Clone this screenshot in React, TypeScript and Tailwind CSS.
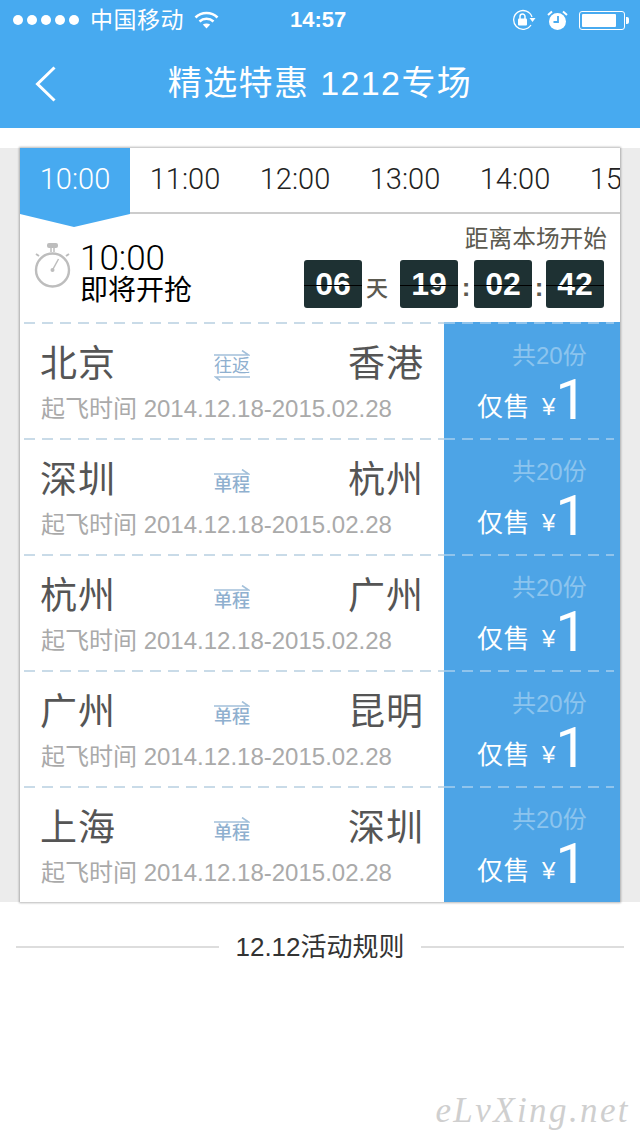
const TIMES = ['10:00', '11:00', '12:00', '13:00', '14:00', '15:00'];

const FLIGHTS = [
    { from: '北京', to: '香港', type: '往返' },
    { from: '深圳', to: '杭州', type: '单程' },
    { from: '杭州', to: '广州', type: '单程' },
    { from: '广州', to: '昆明', type: '单程' },
    { from: '上海', to: '深圳', type: '单程' },
];

const SANS = "font-['Liberation_Sans','Noto_Sans_CJK_SC',sans-serif]";

function FlipBox({ value }: { value: string }) {
    return (
        <div className="relative flex h-[48px] w-[58px] items-center justify-center rounded-[3px] bg-[#1e3133] text-[32px] font-bold leading-none text-white">
            {value}
            <div className="absolute left-0 right-0 top-[25px] h-px bg-black" />
        </div>
    );
}

function Stopwatch() {
    return (
        <svg width="38" height="46" viewBox="0 0 38 46" fill="none" stroke="#bdbdbd">
            <rect x="13" y="0" width="11" height="5" rx="2" fill="#bdbdbd" stroke="none" />
            <path d="M17 5v4M20 5v4" strokeWidth="1.5" />
            <path d="M2 11l3 2M35 11l-3 2" strokeWidth="2" />
            <circle cx="18.5" cy="27" r="16.5" strokeWidth="2.4" />
            <path d="M18.5 27l6-11" strokeWidth="1.5" />
            <circle cx="18.5" cy="27" r="2" fill="#bdbdbd" stroke="none" />
        </svg>
    );
}

function RouteBadge({ type }: { type: string }) {
    const isReturn = type === '往返';
    return (
        <div className={`flex w-[36px] flex-col items-center text-[#8fb0cf] ${isReturn ? '' : 'mt-[2px]'}`}>
            <svg width="36" height="6" viewBox="0 0 36 6" fill="none" stroke="#a3c0da" strokeWidth="1.6">
                <path d="M0 5h34.5L28 0.5" />
            </svg>
            <span className={`text-[18px] leading-[20px] ${isReturn ? '' : 'font-medium'}`}>{type}</span>
            {isReturn && (
                <svg width="36" height="5" viewBox="0 0 36 5" fill="none" stroke="#a3c0da" strokeWidth="1.6">
                    <path d="M36 1H1.5L6 4.5" />
                </svg>
            )}
        </div>
    );
}

function FlightRow({ from, to, type }: { from: string; to: string; type: string }) {
    return (
        <div className="flex h-[116px]">
            <div className="w-[424px]">
                <div className="ml-[4px] h-[2px] bg-[repeating-linear-gradient(90deg,#c9dbe8_0,#c9dbe8_11px,transparent_11px,transparent_18px)]" />
                <div className="mt-[19px] flex h-[44px] items-center justify-between pl-[20px] pr-[20px]">
                    <span className="w-[76px] text-[37px] leading-[44px] tracking-[1px] text-[#555]">{from}</span>
                    <RouteBadge type={type} />
                    <span className="w-[76px] text-right text-[37px] leading-[44px] tracking-[1px] text-[#555]">{to}</span>
                </div>
                <div className="mt-[6px] whitespace-nowrap pl-[21px] text-[24px] leading-[32px] text-[#aaa]">
                    起飞时间 2014.12.18-2015.02.28
                </div>
            </div>
            <div className="w-[176px] bg-[#4da4e6]">
                <div className="mr-[6px] h-[2px] bg-[repeating-linear-gradient(90deg,#90c4ec_0,#90c4ec_11px,transparent_11px,transparent_18px)]" />
                <div className="mt-[17px] pl-[68px] text-[24px] leading-[30px] text-[#8cc4ee]">共20份</div>
                <div className="flex h-[55px] items-end pl-[33px]">
                    <span className="pb-[1px] text-[26px] leading-[36px] tracking-[0.5px] text-white">仅售</span>
                    <span className="ml-[12px] pb-[1px] text-[24px] leading-[36px] text-white">¥</span>
                    <span className="font-['Roboto',sans-serif] text-[56px] font-normal leading-[52px] text-white">1</span>
                </div>
            </div>
        </div>
    );
}

export default function App() {
    return (
        <div className={`relative h-[1136px] w-[640px] overflow-hidden bg-white ${SANS}`}>
            {/* Status bar + nav */}
            <div className="h-[128px] bg-[#47aaf0] text-white">
                <div className="flex h-[40px] items-center pl-[13px]">
                    <div className="flex gap-[4px]">
                        {[0, 1, 2, 3, 4].map((i) => (
                            <div key={i} className="h-[10px] w-[10px] rounded-full bg-white" />
                        ))}
                    </div>
                    <span className="ml-[11px] text-[23px] leading-none tracking-[0.5px]">中国移动</span>
                    <svg className="ml-[10px]" width="25" height="20" viewBox="0 0 25 20" fill="none" stroke="white" strokeWidth="2.6">
                        <path d="M1.5 7.5c6-6 16-6 22 0" />
                        <path d="M5.5 11.5c4-3.6 10-3.6 14 0" />
                        <path d="M12.5 18.5L8.8 14.6c2.2-1.6 5.2-1.6 7.4 0z" fill="white" stroke="none" />
                    </svg>
                    <span className="ml-[71px] text-[22px] font-bold leading-none">14:57</span>
                    <div className="ml-auto flex items-center pr-[11px]">
                        <svg width="24" height="22" viewBox="0 0 24 22" fill="none" stroke="white">
                            <path d="M20 8A9.4 9.4 0 1 0 19 16" strokeWidth="1.3" />
                            <path d="M17.5 9h6L20.5 13z" fill="white" stroke="none" />
                            <rect x="6" y="9.5" width="9" height="7" rx="1" fill="white" stroke="none" />
                            <path d="M8 10V7.5a2.5 2.5 0 0 1 5 0V10" strokeWidth="1.5" />
                        </svg>
                        <svg className="ml-[11px]" width="21" height="21" viewBox="0 0 21 21" fill="none">
                            <circle cx="10.5" cy="11.5" r="8.5" fill="white" />
                            <path d="M11 6v6H6.5" stroke="#47aaf0" strokeWidth="1.8" />
                            <path d="M1 5l4-3.5M20 5l-4-3.5" stroke="white" strokeWidth="2" />
                        </svg>
                        <div className="ml-[11px] flex items-center">
                            <div className="h-[19px] w-[46px] rounded-[3px] border border-white p-[2px]">
                                <div className="h-full w-[34px] rounded-[1px] bg-white" />
                            </div>
                            <div className="ml-px h-[7px] w-[3px] rounded-r-[2px] bg-white" />
                        </div>
                    </div>
                </div>
                <div className="relative flex h-[88px] items-center justify-center pb-[2px]">
                    <svg className="absolute left-[35px] top-[26px]" width="22" height="36" viewBox="0 0 22 36" fill="none" stroke="white" strokeWidth="3">
                        <path d="M19.5 1.5L2.5 18l17 16.5" />
                    </svg>
                    <span className="whitespace-nowrap text-[34px] leading-none tracking-[1.4px]">精选特惠 1212专场</span>
                </div>
            </div>

            {/* Flight list */}
            <div className="mt-[20px] bg-[#ececec] px-[20px]">
                <div className="bg-white shadow-[0_0_2px_1px_rgba(0,0,0,0.28)]">
                    <div className="flex h-[66px] overflow-hidden border-b-2 border-[#ccc]">
                        {TIMES.map((time, i) => (
                            <div
                                key={time}
                                className={`flex h-[65px] w-[110px] shrink-0 items-center justify-center pb-[2px] font-['Roboto',sans-serif] text-[29px] font-light ${i === 0 ? 'bg-[#47aaf0] text-white' : 'text-[#222]'}`}
                            >
                                {time}
                            </div>
                        ))}
                    </div>
                    <div className="relative flex h-[108px] items-start">
                        <div className="absolute left-0 top-[-2px] h-[15px] w-[110px] bg-[#47aaf0] [clip-path:polygon(0_0,100%_0,100%_2px,54px_100%,0_2px)]" />
                        <div className="ml-[14px] mt-[29px]">
                            <Stopwatch />
                        </div>
                        <div className="ml-[8px] mt-[28px] text-black">
                            <div className="font-['Roboto',sans-serif] text-[35px] font-light leading-[34px]">10:00</div>
                            <div className="text-[28px] leading-[30px]">即将开抢</div>
                        </div>
                        <div className="ml-auto mr-[16px] mt-[10px] flex flex-col items-end text-[#5c5a50]">
                            <div className="mr-[-3px] text-[23.7px] leading-[30px]">距离本场开始</div>
                            <div className="mt-[6px] flex items-center">
                                <FlipBox value="06" />
                                <span className="mx-[4px] mt-[10px] w-[22px] text-[22px] font-medium leading-none">天</span>
                                <div className="w-[8px]" />
                                <FlipBox value="19" />
                                <span className="mt-[6px] w-[16px] text-center text-[26px] font-bold leading-none">:</span>
                                <FlipBox value="02" />
                                <span className="mt-[6px] w-[14px] text-center text-[26px] font-bold leading-none">:</span>
                                <FlipBox value="42" />
                            </div>
                        </div>
                    </div>
                    {FLIGHTS.map((f, i) => (
                        <FlightRow key={i} {...f} />
                    ))}
                </div>
            </div>

            {/* Rules heading */}
            <div className="mt-[25px] flex items-center px-[16px]">
                <div className="h-[2px] flex-1 bg-[#ddd]" />
                <span className="mx-[16px] text-[26px] leading-[40px] text-[#333]">12.12活动规则</span>
                <div className="h-[2px] flex-1 bg-[#ddd]" />
            </div>

            {/* Watermark */}
            <div className="absolute bottom-[8px] right-[10px] font-['Liberation_Serif',serif] text-[35px] italic leading-none tracking-[2.4px] text-[#cfcfcf]">
                eLvXing.net
            </div>
        </div>
    );
}
